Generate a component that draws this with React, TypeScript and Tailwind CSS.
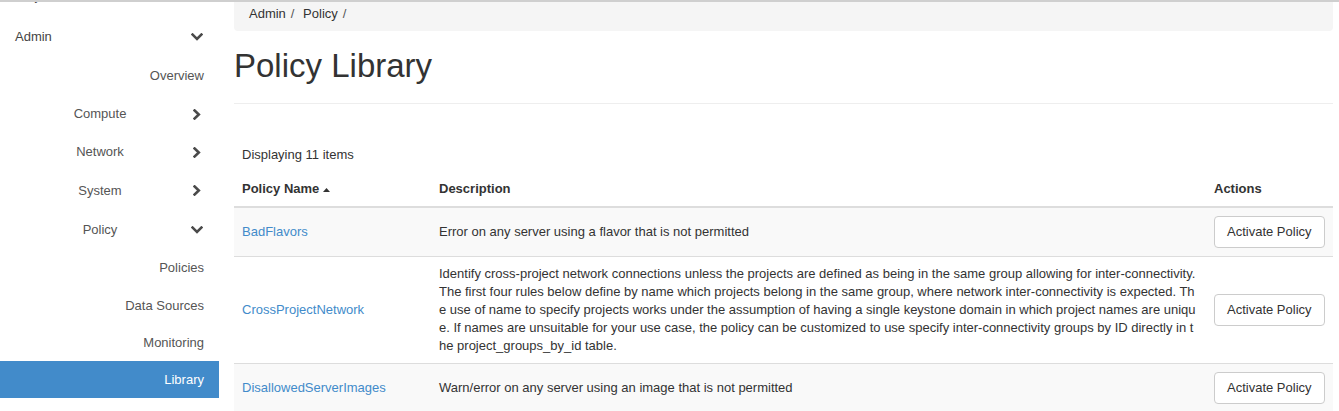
import type { ReactNode } from 'react'

function ChevronDown() {
  return (
    <svg width="12" height="8" viewBox="0 0 12 8" className="text-[#4a4a4a]">
      <path d="M1.6 1.6 L6 6 L10.4 1.6" fill="none" stroke="currentColor" strokeWidth="2.6" strokeLinecap="square" />
    </svg>
  )
}

function ChevronRight() {
  return (
    <svg width="8" height="11" viewBox="0 0 8 11" className="text-[#4a4a4a]">
      <path d="M1.6 1.5 L5.8 5.5 L1.6 9.5" fill="none" stroke="currentColor" strokeWidth="2.6" strokeLinecap="square" />
    </svg>
  )
}

type NavItem = {
  label: string
  level: 1 | 2 | 3
  icon?: 'down' | 'right'
  h: string
  active?: boolean
}

const nav: NavItem[] = [
  { label: 'Project', level: 1, icon: 'down', h: 'h-[44px]' },
  { label: 'Admin', level: 1, icon: 'down', h: 'h-[38px]' },
  { label: 'Overview', level: 3, h: 'h-[39px]' },
  { label: 'Compute', level: 2, icon: 'right', h: 'h-[38px]' },
  { label: 'Network', level: 2, icon: 'right', h: 'h-[38px]' },
  { label: 'System', level: 2, icon: 'right', h: 'h-[39px]' },
  { label: 'Policy', level: 2, icon: 'down', h: 'h-[39px]' },
  { label: 'Policies', level: 3, h: 'h-[38px]' },
  { label: 'Data Sources', level: 3, h: 'h-[37px]' },
  { label: 'Monitoring', level: 3, h: 'h-[37px]' },
  { label: 'Library', level: 3, h: 'h-[37px]', active: true },
]

function SideItem({ item }: { item: NavItem }) {
  const icon = item.icon === 'down' ? <ChevronDown /> : item.icon === 'right' ? <ChevronRight /> : null

  if (item.level === 1) {
    return (
      <div className={`${item.h} flex items-center justify-between pl-[15px] pr-[16px] text-[#444]`}>
        <span>{item.label}</span>
        {icon}
      </div>
    )
  }
  if (item.level === 2) {
    return (
      <div className={`${item.h} flex items-center pl-[10px] pr-[16px] text-[#555]`}>
        <span className="flex-1 text-center">{item.label}</span>
        <span className="flex w-[13px] justify-center">{icon}</span>
      </div>
    )
  }
  return (
    <div
      className={`${item.h} flex items-center justify-end pr-[15px] ${
        item.active ? 'bg-[#428bca] text-white' : 'text-[#555]'
      }`}
    >
      {item.label}
    </div>
  )
}

const crossProject =
  'Identify cross-project network connections unless the projects are defined as being in the same group allowing for inter-connectivity. The first four rules below define by name which projects belong in the same group, where network inter-connectivity is expected. The use of name to specify projects works under the assumption of having a single keystone domain in which project names are unique. If names are unsuitable for your use case, the policy can be customized to use specify inter-connectivity groups by ID directly in the project_groups_by_id table.'

const policies = [
  { name: 'BadFlavors', desc: 'Error on any server using a flavor that is not permitted' },
  { name: 'CrossProjectNetwork', desc: crossProject },
  { name: 'DisallowedServerImages', desc: 'Warn/error on any server using an image that is not permitted' },
]

function Th({ children, className = '' }: { children: ReactNode; className?: string }) {
  return <th className={`border-b-2 border-[#ddd] p-[8px] text-left align-bottom font-bold ${className}`}>{children}</th>
}

export default function App() {
  return (
    <div className="flex h-[411px] overflow-hidden border-t-2 border-[#cfcfcf] bg-white font-['Liberation_Sans',Arial,sans-serif] text-[13px] leading-[18px] text-[#333]">
      {/* Sidebar */}
      <aside className="w-[219px] shrink-0 overflow-hidden">
        <div className="-mt-[28px]">
          {nav.map((item) => (
            <SideItem key={item.label} item={item} />
          ))}
        </div>
      </aside>

      {/* Content */}
      <main className="ml-[15px] mr-[6px] min-w-0 flex-1">
        <ol className="flex rounded-b-[4px] bg-[#f5f5f5] pb-[8px] pl-[15px] pt-[3px]">
          <li>Admin</li>
          <li className="before:px-[5px] before:text-[#555] before:content-['/\00a0']">Policy</li>
          <li className="before:px-[5px] before:text-[#555] before:content-['/\00a0']"></li>
        </ol>

        <div className="mt-[17px] border-b border-[#eee] pb-[19px]">
          <h1 className="text-[33px] leading-[36px] font-normal text-[#333]">Policy Library</h1>
        </div>

        <div className="mt-[42px] pl-[8px]">Displaying 11 items</div>

        <table className="mt-[8px] w-full table-fixed border-collapse">
          <colgroup>
            <col className="w-[197px]" />
            <col />
            <col className="w-[127px]" />
          </colgroup>
          <thead>
            <tr>
              <Th>
                Policy Name
                <svg width="7" height="4" viewBox="0 0 7 4" className="ml-[4px] inline-block align-middle">
                  <path d="M0 4 L3.5 0 L7 4 Z" fill="#333" />
                </svg>
              </Th>
              <Th>Description</Th>
              <Th>Actions</Th>
            </tr>
          </thead>
          <tbody>
            {policies.map((p, i) => (
              <tr key={p.name} className={i % 2 === 0 ? 'bg-[#f9f9f9]' : 'bg-white'}>
                <td className="border-t border-[#ddd] p-[8px] align-middle">
                  <a href="#" className="text-[#428bca]">
                    {p.name}
                  </a>
                </td>
                <td className="border-t border-[#ddd] p-[8px] align-middle break-all">{p.desc}</td>
                <td className="border-t border-[#ddd] p-[8px] align-middle">
                  <button className="whitespace-nowrap rounded-[4px] border border-[#ccc] bg-white px-[12px] py-[6px] text-[#333]">
                    Activate Policy
                  </button>
                </td>
              </tr>
            ))}
          </tbody>
        </table>
      </main>
    </div>
  )
}
